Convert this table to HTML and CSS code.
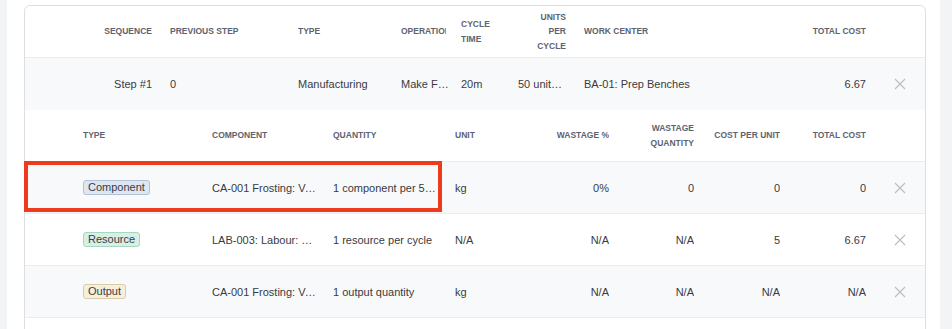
FILE: index.html
```html
<!DOCTYPE html>
<html>
<head>
<meta charset="utf-8">
<link rel="stylesheet" href="styles.css">
</head>
<body>
<div class="page">
  <div class="panel">
    <div class="card">
      <div class="row main head">
        <div class="c r">Sequence</div>
        <div class="c">Previous Step</div>
        <div class="c">Type</div>
        <div class="c op-head">Operation</div>
        <div class="c">Cycle Time</div>
        <div class="c r">Units per cycle</div>
        <div class="c">Work Center</div>
        <div class="c r">Total Cost</div>
        <div class="c"></div>
      </div>
      <div class="row main body alt">
        <div class="c r">Step #1</div>
        <div class="c">0</div>
        <div class="c">Manufacturing</div>
        <div class="c op-body">Make Frosting</div>
        <div class="c">20m</div>
        <div class="c r wide-left">50 units per cycle</div>
        <div class="c">BA-01: Prep Benches</div>
        <div class="c r">6.67</div>
        <div class="c x"><svg width="12" height="12" viewBox="0 0 12 12"><path d="M1 1L11 11M11 1L1 11" stroke="#b9bdc3" stroke-width="1.1" fill="none"/></svg></div>
      </div>
      <div class="row sub head">
        <div class="c"></div>
        <div class="c">Type</div>
        <div class="c">Component</div>
        <div class="c">Quantity</div>
        <div class="c">Unit</div>
        <div class="c r">Wastage %</div>
        <div class="c r">Wastage Quantity</div>
        <div class="c r">Cost per unit</div>
        <div class="c r">Total Cost</div>
        <div class="c"></div>
      </div>
      <div class="row sub body alt">
        <div class="c"></div>
        <div class="c"><span class="badge comp">Component</span></div>
        <div class="c tight">CA-001 Frosting: Vanilla Buttercream</div>
        <div class="c">1 component per 50 units</div>
        <div class="c">kg</div>
        <div class="c r">0%</div>
        <div class="c r">0</div>
        <div class="c r">0</div>
        <div class="c r">0</div>
        <div class="c x"><svg width="12" height="12" viewBox="0 0 12 12"><path d="M1 1L11 11M11 1L1 11" stroke="#b9bdc3" stroke-width="1.1" fill="none"/></svg></div>
      </div>
      <div class="row sub body">
        <div class="c"></div>
        <div class="c"><span class="badge res">Resource</span></div>
        <div class="c">LAB-003: Labour: Baker</div>
        <div class="c">1 resource per cycle</div>
        <div class="c">N/A</div>
        <div class="c r">N/A</div>
        <div class="c r">N/A</div>
        <div class="c r">5</div>
        <div class="c r">6.67</div>
        <div class="c x"><svg width="12" height="12" viewBox="0 0 12 12"><path d="M1 1L11 11M11 1L1 11" stroke="#b9bdc3" stroke-width="1.1" fill="none"/></svg></div>
      </div>
      <div class="row sub body alt">
        <div class="c"></div>
        <div class="c"><span class="badge out">Output</span></div>
        <div class="c tight">CA-001 Frosting: Vanilla Buttercream</div>
        <div class="c">1 output quantity</div>
        <div class="c">kg</div>
        <div class="c r">N/A</div>
        <div class="c r">N/A</div>
        <div class="c r">N/A</div>
        <div class="c r">N/A</div>
        <div class="c x"><svg width="12" height="12" viewBox="0 0 12 12"><path d="M1 1L11 11M11 1L1 11" stroke="#b9bdc3" stroke-width="1.1" fill="none"/></svg></div>
      </div>
      <div class="highlight"></div>
    </div>
  </div>
</div>
</body>
</html>
```

FILE: styles.css
```css
* { box-sizing: border-box; }
html, body { margin: 0; padding: 0; }
body {
  background: #f3f4f6;
  font-family: "Liberation Sans", Arial, sans-serif;
  font-size: 11px;
  color: #383b41;
  overflow: hidden;
}
.page { height: 329px; }
.panel {
  margin-left: 7px;
  width: 933px;
  height: 100%;
  background: #ffffff;
  padding: 5px 0 0 17px;
}
.card {
  position: relative;
  width: 902px;
  height: 360px;
  border: 1px solid #dcdee2;
  border-radius: 6px;
  background: #fff;
}
.row {
  display: grid;
  align-items: center;
  height: 52px;
  border-bottom: 1px solid #ebecef;
}
.main { grid-template-columns: 136px 128px 103px 60px 61px 62px 199px 101px 50px; }
.sub { grid-template-columns: 49px 129px 121px 122px 72px 100px 85px 86px 86px 50px; }
.row.main.body { border-bottom: none; }
.head {
  font-size: 8.5px;
  font-weight: bold;
  text-transform: uppercase;
  color: #5d6370;
  line-height: 14.5px;
}
.main.head { border-radius: 6px 6px 0 0; }
.c {
  margin: 0 9px;
  overflow: hidden;
  white-space: nowrap;
  text-overflow: ellipsis;
}
.head .c { white-space: normal; text-overflow: clip; }
.head .op-head { margin-right: 6px; }
.op-body { margin-right: 3px; }
.wide-left { margin-left: 5px; }
.tight { margin-right: 4px; }
.r { text-align: right; }
.alt { background: #f8f9fb; }
.x { display: flex; justify-content: center; align-items: center; }
.badge {
  display: inline-block;
  padding: 0 4px;
  line-height: 13px;
  border: 1px solid;
  border-radius: 3px;
  color: #3a3d43;
}
.comp { background: #dde6f1; border-color: #b2c2d6; }
.res { background: #d7efe5; border-color: #a6d5c1; }
.out { background: #f6efdc; border-color: #d9cda8; }
.highlight {
  position: absolute;
  left: -1px;
  top: 155px;
  width: 418px;
  height: 51px;
  border: 4px solid #ee3a1d;
}
```
